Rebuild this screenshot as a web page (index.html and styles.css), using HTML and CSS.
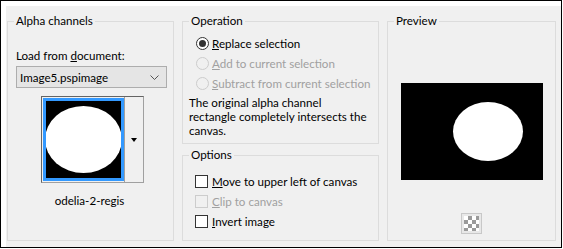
FILE: index.html
```html
<!DOCTYPE html>
<html>
<head>
  <title>Load Selection From Alpha Channel</title>
  <meta charset="UTF-8">
  <link rel="stylesheet" href="styles.css">
</head>
<body>
  <div class="dialog">
    <fieldset class="group">
      <legend>Alpha channels</legend>
      <div class="field-label">Load from <u>d</u>ocument:</div>
      <div class="combo">
        <span>Image5.pspimage</span>
        <svg class="chevron" width="9" height="5" viewBox="0 0 9 5">
          <polyline points="0.5,0.5 4.5,4.5 8.5,0.5" fill="none" stroke="#555" stroke-width="1"/>
        </svg>
      </div>
      <div class="thumb-box">
        <div class="thumb">
          <svg width="81" height="83" viewBox="0 0 81 83">
            <ellipse cx="40.5" cy="41.5" rx="38.5" ry="33.5" fill="#fff"/>
          </svg>
        </div>
        <div class="thumb-btn">
          <span class="tri"></span>
        </div>
      </div>
      <div class="thumb-name">odelia-2-regis</div>
    </fieldset>

    <div class="middle">
      <fieldset class="group operation">
        <legend>Operation</legend>
        <div class="row">
          <span class="radio checked"></span>
          <span><u>R</u>eplace selection</span>
        </div>
        <div class="row disabled">
          <span class="radio"></span>
          <span><u>A</u>dd to current selection</span>
        </div>
        <div class="row disabled">
          <span class="radio"></span>
          <span><u>S</u>ubtract from current selection</span>
        </div>
        <p class="note">The original alpha channel<br>rectangle completely intersects the<br>canvas.</p>
      </fieldset>

      <fieldset class="group options">
        <legend>Options</legend>
        <div class="row">
          <span class="check"></span>
          <span><u>M</u>ove to upper left of canvas</span>
        </div>
        <div class="row disabled">
          <span class="check"></span>
          <span><u>C</u>lip to canvas</span>
        </div>
        <div class="row">
          <span class="check"></span>
          <span><u>I</u>nvert image</span>
        </div>
      </fieldset>
    </div>

    <fieldset class="group preview">
      <legend>Preview</legend>
      <div class="preview-img">
        <svg width="142" height="97" viewBox="0 0 142 97">
          <rect width="142" height="97" fill="#000"/>
          <ellipse cx="87" cy="48.5" rx="35" ry="29.5" fill="#fff"/>
        </svg>
      </div>
      <div class="checker-btn"><span class="checker"></span></div>
    </fieldset>
  </div>
</body>
</html>
```

FILE: styles.css
```css
body {
  margin: 0;
  background: #fff;
  font-family: "Segoe UI", Lato, "Noto Sans", sans-serif;
  font-size: 11.6px;
  color: #000;
}
.dialog {
  box-sizing: border-box;
  width: 562px;
  height: 248px;
  border: 1px solid #000;
  background: #f0f0f0;
  box-shadow: inset 5px 5px 0 #fff;
  padding: 12px 5px 6px 6px;
  display: grid;
  grid-template-columns: 167px 197px 169px;
  column-gap: 8px;
}
.group {
  box-sizing: border-box;
  margin: 0;
  padding: 0 6px 0 8px;
  border: 1px solid #dcdcdc;
  min-width: 0;
}
legend {
  padding: 0 2px;
  margin-left: -2px;
  line-height: 16px;
}
u {
  text-decoration: underline;
  text-underline-offset: 1px;
}
.field-label {
  margin-top: 19px;
  line-height: 16px;
}
.combo {
  box-sizing: border-box;
  margin-top: 2px;
  height: 22px;
  width: 151px;
  border: 1px solid #adadad;
  background: #e5e5e5;
  display: flex;
  align-items: center;
  justify-content: space-between;
  padding: 0 7px 0 3px;
}
.chevron {
  display: block;
}
.thumb-box {
  box-sizing: border-box;
  margin: 8px 0 0 25px;
  width: 103px;
  height: 87px;
  display: flex;
  border: 1px solid;
  border-color: #646464 #a0a0a0 #a0a0a0 #646464;
  background: #f0f0f0;
}
.thumb {
  margin: 1px 0 0 1px;
  width: 81px;
  height: 83px;
  background: #000;
  outline: 3px solid #3399ff;
  outline-offset: -3px;
}
.thumb svg {
  display: block;
}
.thumb-btn {
  flex: 1;
  border-left: 1px solid #a0a0a0;
  display: flex;
  align-items: center;
  justify-content: center;
}
.tri {
  width: 0;
  height: 0;
  border-left: 3.5px solid transparent;
  border-right: 3.5px solid transparent;
  border-top: 4px solid #000;
}
.thumb-name {
  margin-top: 10px;
  line-height: 16px;
  text-align: center;
  padding-right: 4px;
}
.middle {
  display: flex;
  flex-direction: column;
  gap: 3px;
}
.operation {
  height: 131px;
  padding-top: 4px;
}
.options {
  flex: 1;
  padding-top: 8px;
}
.row {
  display: flex;
  align-items: center;
  gap: 3px;
  height: 20px;
  margin-left: 5px;
  white-space: nowrap;
}
.row.disabled {
  color: #a0a0a0;
}
.radio {
  flex: none;
  box-sizing: border-box;
  width: 13px;
  height: 13px;
  border: 1px solid #333;
  border-radius: 50%;
  background: #fff;
  display: flex;
  align-items: center;
  justify-content: center;
}
.radio.checked::after {
  content: "";
  width: 7px;
  height: 7px;
  border-radius: 50%;
  background: #333;
}
.disabled .radio,
.disabled .check {
  border-color: #cccccc;
  background: #f0f0f0;
}
.options .row {
  gap: 4px;
  margin-left: 4px;
}
.check {
  flex: none;
  box-sizing: border-box;
  width: 13px;
  height: 13px;
  border: 1px solid #333;
  background: #fff;
}
.note {
  margin: 3px 0 0 -2px;
  line-height: 14px;
  white-space: nowrap;
}
.preview-img {
  margin-top: 54px;
  display: flex;
  justify-content: center;
  padding-right: 2px;
}
.preview-img svg {
  display: block;
}
.checker-btn {
  box-sizing: border-box;
  margin: 33px auto 0;
  width: 21px;
  height: 21px;
  border: 1px solid #c8c8c8;
  background: #e8e8e8;
  display: flex;
  align-items: center;
  justify-content: center;
  position: relative;
  left: -1px;
}
.checker {
  width: 15px;
  height: 15px;
  background: repeating-conic-gradient(#9a9a9a 0 25%, #fff 0 50%) 0 0 / 8px 8px;
}
```
